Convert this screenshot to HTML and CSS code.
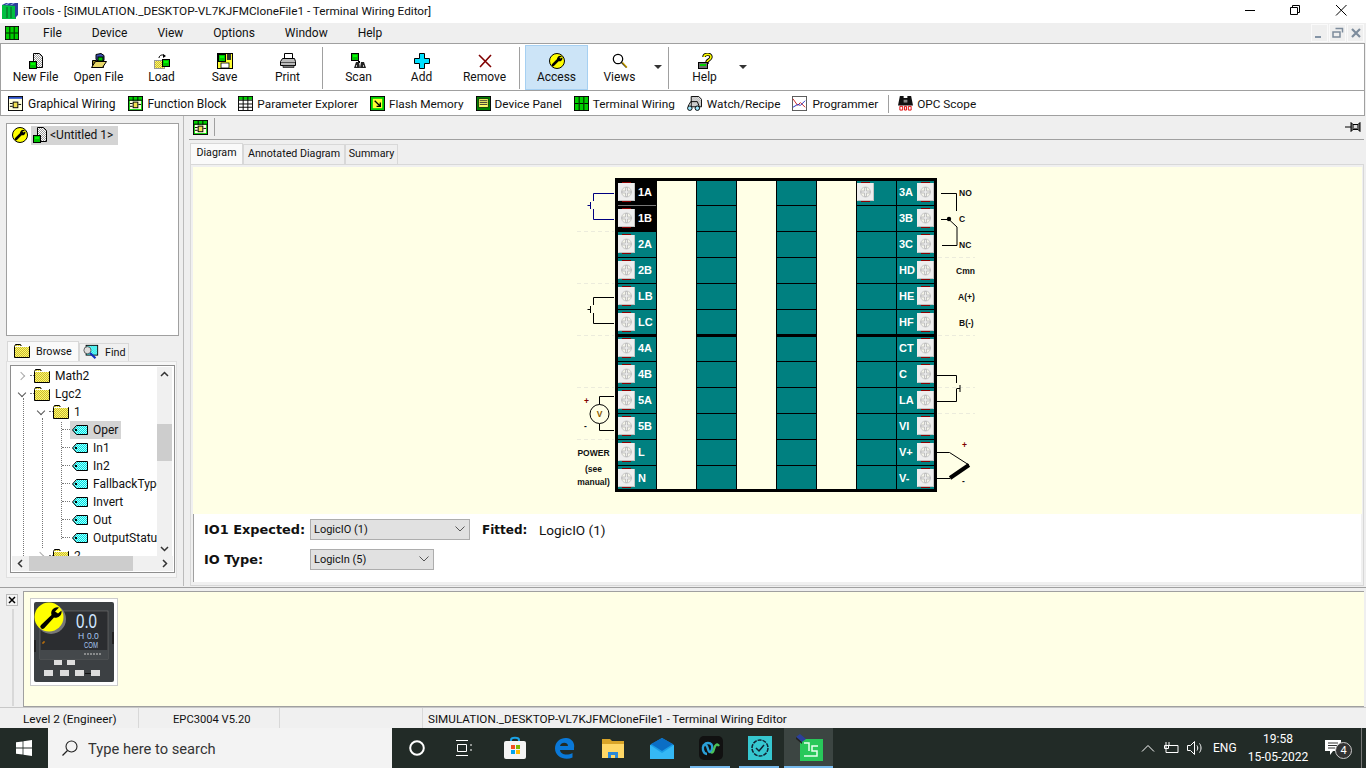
FILE: index.html
```html
<!DOCTYPE html>
<html lang="en">
<head>
    <meta charset="UTF-8">
    <meta name="viewport" content="width=device-width, initial-scale=1.0">
    <title>iTools - Terminal Wiring Editor</title>
    <link rel="stylesheet" href="styles.css">
</head>
<body>
    <!-- shared icons -->
    <svg class="defs" width="0" height="0">
        <defs>
            <pattern id="dither" width="2" height="2" patternUnits="userSpaceOnUse">
                <rect width="2" height="2" fill="#fff"/><rect width="1" height="1" fill="#999"/><rect x="1" y="1" width="1" height="1" fill="#999"/>
            </pattern>
            <pattern id="ditherYellow" width="2" height="2" patternUnits="userSpaceOnUse">
                <rect width="2" height="2" fill="#ffff66"/><rect width="1" height="1" fill="#c9b437"/><rect x="1" y="1" width="1" height="1" fill="#c9b437"/>
            </pattern>
            <pattern id="ditherCyan" width="2" height="2" patternUnits="userSpaceOnUse">
                <rect width="2" height="2" fill="#00e0e0"/><rect width="1" height="1" fill="#a0ffff"/><rect x="1" y="1" width="1" height="1" fill="#a0ffff"/>
            </pattern>
            <symbol id="i-page" viewBox="0 0 16 16">
                <path d="M5.5.5h6l3 3v11h-9z" fill="url(#dither)" stroke="#000"/>
                <rect x="1.5" y="8.5" width="7" height="7" fill="#00c000" stroke="#000"/>
                <rect x="3" y="10" width="4" height="2" fill="#00ff00"/>
            </symbol>
            <symbol id="i-open" viewBox="0 0 16 16">
                <path d="M1.5 7.5h4l1-1h6v8h-11z" fill="#8a7a20" stroke="#000"/>
                <path d="M5 1.5l5-1 3 2v5l-5 1-3-2z" fill="#3a4fb0" stroke="#000"/>
                <rect x="7" y="4" width="5" height="4" fill="#00c000" stroke="#000"/>
                <path d="M.5 14.5l4-6h11l-4 6z" fill="#e8d86a" stroke="#000"/>
            </symbol>
            <symbol id="i-load" viewBox="0 0 16 16">
                <path d="M5 5c0-3 4-4 6-2" fill="none" stroke="#000"/>
                <path d="M9 1l3 2-3 2z" fill="#000"/>
                <rect x=".5" y="7.5" width="10" height="8" fill="url(#ditherYellow)" stroke="#999"/>
                <rect x="8.5" y="6.5" width="7" height="7" fill="#00c000" stroke="#000"/>
                <rect x="10" y="8" width="4" height="2" fill="#00ff00"/>
            </symbol>
            <symbol id="i-save" viewBox="0 0 16 16">
                <rect x=".5" y=".5" width="15" height="15" fill="#ffff33" stroke="#000"/>
                <rect x="4" y="10" width="8" height="5" fill="#fff" stroke="#000" stroke-width=".8"/>
                <rect x="1.5" y="1.5" width="7" height="7" fill="#00c000" stroke="#000"/>
                <rect x="3" y="3" width="4" height="2" fill="#00ff00"/>
                <rect x="10" y="1" width="4" height="6" fill="#333"/>
            </symbol>
            <symbol id="i-print" viewBox="0 0 16 16">
                <path d="M4.5.5h8v5h-8z" fill="#fff" stroke="#000"/>
                <path d="M2.5 5.5h12l1 3v4H.5v-4z" fill="#bbb" stroke="#000"/>
                <path d="M1 9.5h14" stroke="#555"/>
                <path d="M3 12.5h11v2H3z" fill="#777" stroke="#000" stroke-width=".6"/>
            </symbol>
            <symbol id="i-scan" viewBox="0 0 16 16">
                <rect x=".5" y=".5" width="7" height="7" fill="#00c000" stroke="#000"/>
                <rect x="2" y="2" width="4" height="2" fill="#00ff00"/>
                <path d="M7 8h2v2H7z" fill="#000"/>
                <path d="M5 9h3l1 6H3zM10 9h3l2 6H9z" fill="#222"/>
                <path d="M5 12h1v2H5zM12 12h1v2h-1z" fill="#bbb"/>
            </symbol>
            <symbol id="i-add" viewBox="0 0 16 16">
                <path d="M5.5.5h5v5h5v5h-5v5h-5v-5h-5v-5h5z" fill="#00e0ff" stroke="#000"/>
            </symbol>
            <symbol id="i-remove" viewBox="0 0 16 16">
                <path d="M2 2l12 12M14 2L3 14" stroke="#800000" stroke-width="1.6" fill="none"/>
            </symbol>
            <symbol id="i-wrench" viewBox="0 0 16 16">
                <circle cx="8" cy="8" r="7.5" fill="#ffff00" stroke="#000"/>
                <path d="M4 12l5.500-5.500" stroke="#000" stroke-width="2.600" stroke-linecap="round"/>
                <path d="M13 3.400a3 3 0 0 0-4.500 3.800l.8.800a3 3 0 0 0 4-3.800l-1.600 1.300-1.500-.8z" fill="#000"/>
            </symbol>
            <symbol id="i-views" viewBox="0 0 16 16">
                <circle cx="6" cy="6" r="4.700" fill="#fff" stroke="#000" stroke-width="1.200"/>
                <path d="M9.500 9.500l5 5" stroke="#000" stroke-width="1.200"/>
                <path d="M10.500 9.500l4.500 5" stroke="#c8a000" stroke-width="1.200"/>
            </symbol>
            <symbol id="i-help" viewBox="0 0 16 16">
                <path d="M7 4c0-3 7-4 7 0 0 3-4 3-4 5v2" fill="none" stroke="#000" stroke-width="3.400"/>
                <path d="M7 4c0-3 7-4 7 0 0 3-4 3-4 5v2" fill="none" stroke="#ffff00" stroke-width="1.600"/>
                <rect x="1.500" y="9.500" width="9" height="6" fill="#707070" stroke="#000"/>
                <rect x="3" y="11" width="6" height="2" fill="#00d000"/>
            </symbol>
            <symbol id="i-graphic" viewBox="0 0 16 16">
                <rect x=".5" y=".5" width="15" height="15" fill="#ffffe0" stroke="#000"/>
                <rect x="1" y="1" width="14" height="2" fill="#2a4fc8"/>
                <rect x="5.500" y="6.500" width="5" height="6" fill="#f0e050" stroke="#000"/>
                <path d="M2 8h3M2 11h3M11 9h3" stroke="#000"/>
            </symbol>
            <symbol id="i-block" viewBox="0 0 16 16">
                <rect x=".5" y=".5" width="15" height="15" fill="#00d000" stroke="#000"/>
                <rect x="2" y="5" width="12" height="9" fill="#ffffe0"/>
                <path d="M1 4.500h14M5.500 1v4M10.500 1v4" stroke="#000"/>
                <rect x="5.500" y="6.500" width="5" height="6" fill="#f0e050" stroke="#000"/>
                <path d="M2 8h3M2 11h3M11 9h3" stroke="#000"/>
            </symbol>
            <symbol id="i-param" viewBox="0 0 16 16">
                <rect x=".5" y=".5" width="15" height="15" fill="#fff" stroke="#000"/>
                <rect x="1" y="1" width="14" height="3" fill="#00d000"/>
                <path d="M1 4.500h14M1 8.500h14M1 12h14M5.500 1v14M10.500 1v14" stroke="#000"/>
            </symbol>
            <symbol id="i-flash" viewBox="0 0 16 16">
                <rect x=".5" y=".5" width="15" height="15" fill="#00d000" stroke="#000"/>
                <rect x="3" y="3" width="10" height="10" fill="#ffff33"/>
                <path d="M5 5l6 6M11 7v4H7" stroke="#000" stroke-width="1.400" fill="none"/>
            </symbol>
            <symbol id="i-panel" viewBox="0 0 16 16">
                <rect x=".5" y=".5" width="15" height="15" fill="#008000" stroke="#000"/>
                <rect x="3" y="3" width="10" height="9" fill="#ffff66" stroke="#000" stroke-width=".6"/>
                <path d="M4 5h8M4 7h8M4 9h8" stroke="#333"/>
            </symbol>
            <symbol id="i-terminal" viewBox="0 0 16 16">
                <rect x=".5" y=".5" width="15" height="15" fill="#00d000" stroke="#000"/>
                <path d="M5.500 1v14M10.500 1v14M1 8h4M6 8h4M11 8h4" stroke="#000"/>
            </symbol>
            <symbol id="i-watch" viewBox="0 0 16 16">
                <path d="M4.500.5h8l3 3v8h-11z" fill="url(#dither)" stroke="#000"/>
                <circle cx="3" cy="13" r="2.400" fill="#a0e8ff" stroke="#000"/>
                <circle cx="11" cy="13" r="2.400" fill="#a0e8ff" stroke="#000"/>
                <path d="M1 11l3-5h7l2 5" fill="none" stroke="#000"/>
            </symbol>
            <symbol id="i-prog" viewBox="0 0 16 16">
                <rect x=".5" y=".5" width="15" height="15" fill="#fff" stroke="#555"/>
                <path d="M1 3l5 7 3-3 5 5" fill="none" stroke="#d02020"/>
                <path d="M1 12l5-3 3 1 5-5" fill="none" stroke="#2030c0"/>
            </symbol>
            <symbol id="i-opc" viewBox="0 0 16 16">
                <path d="M2 0h4v2h4V0h4l2 10H0z" fill="#111"/>
                <path d="M6 4h4v3H6z" fill="#888"/>
                <path d="M2 11h3v4H2zM7 11h2v4H7zM11 11h3v4h-3z" fill="none" stroke="#e00000"/>
            </symbol>
            <symbol id="i-folder" viewBox="0 0 16 16">
                <path d="M.5 3.500l1-2h5l1 2h8v11H.5z" fill="url(#ditherYellow)" stroke="#000"/>
                <path d="M1 3.500h14" stroke="#fff"/>
            </symbol>
            <symbol id="i-tag" viewBox="0 0 16 16">
                <path d="M.5 8l4-4.500h11v9h-11z" fill="url(#ditherCyan)" stroke="#000"/>
                <rect x="3" y="7" width="2" height="2" fill="#000"/>
            </symbol>
            <symbol id="i-find" viewBox="0 0 18 18">
                <rect x="3.500" y="1.500" width="13" height="11" fill="url(#ditherCyan)" stroke="#000"/>
                <circle cx="5" cy="7" r="4" fill="#ddd" stroke="#555"/>
                <path d="M8 10l6 6" stroke="#1030c0" stroke-width="2.400"/>
            </symbol>
            <symbol id="i-screw" viewBox="0 0 17 20">
                <path d="M4 .5h9M4 19.500h9" stroke="#8b0000"/>
                <rect y="1" width="17" height="18" fill="#eeeeee"/>
                <path d="M.5 18.500h16.500M16.500 1v18" stroke="#c4c4c4"/>
                <circle cx="8.500" cy="10" r="5" fill="#f4f4ea" stroke="#c8c8c8"/>
                <path d="M4 9h3.500V5.500h2V9H13v2H9.500v3.500h-2V11H4z" fill="#ececec" stroke="#b8b8b8" stroke-width=".8"/>
            </symbol>
        </defs>
    </svg>

    <div class="app">
        <header class="titlebar">
            <svg class="app-logo" width="16" height="16" viewBox="0 0 16 16">
                <rect y="2" width="14" height="14" fill="#00c040"/>
                <path d="M0 2l4-2h12v12l-3 3V3z" fill="#2b3f9a"/>
                <path d="M3 2l3-2h2L5 2zM8 2l3-2h2l-3 2z" fill="#8fa0e0"/>
                <path d="M5 4v11M9 4v11" stroke="#0a5a20"/>
            </svg>
            <span class="title-text">iTools - [SIMULATION._DESKTOP-VL7KJFMCloneFile1 - Terminal Wiring Editor]</span>
            <div class="win-controls">
                <svg width="46" height="20" viewBox="0 0 46 20"><path d="M19 10.500h10" stroke="#000"/></svg>
                <svg width="46" height="20" viewBox="0 0 46 20"><path d="M18.500 7.500h7v7h-7zM20.500 7V5.500h7v7H26" fill="none" stroke="#000"/></svg>
                <svg width="46" height="20" viewBox="0 0 46 20"><path d="M18 5l10.500 10.500M28.500 5L18 15.500" stroke="#000"/></svg>
            </div>
        </header>

        <nav class="menubar">
            <svg class="menu-icon"><use href="#i-terminal"/></svg>
            <span>File</span><span>Device</span><span>View</span><span>Options</span><span>Window</span><span>Help</span>
            <div class="mdi-controls">
                <div class="mdi-btn"><svg width="12" height="12" viewBox="0 0 12 12"><path d="M1 9h6v2H1z" fill="#8494a6"/></svg></div>
                <div class="mdi-btn"><svg width="12" height="12" viewBox="0 0 12 12"><path d="M3.500 1.500h7v4M1 5h7v5H1z" fill="none" stroke="#7d8c9c" stroke-width="1.500"/></svg></div>
                <div class="mdi-btn"><svg width="12" height="12" viewBox="0 0 12 12"><path d="M2 2l8 8M10 2l-8 8" stroke="#7d8c9c" stroke-width="2.200"/></svg></div>
            </div>
        </nav>

        <div class="toolbar">
            <div class="tool"><svg><use href="#i-page"/></svg><span>New File</span></div>
            <div class="tool"><svg><use href="#i-open"/></svg><span>Open File</span></div>
            <div class="tool"><svg><use href="#i-load"/></svg><span>Load</span></div>
            <div class="tool"><svg><use href="#i-save"/></svg><span>Save</span></div>
            <div class="tool"><svg><use href="#i-print"/></svg><span>Print</span></div>
            <div class="tool-sep"></div>
            <div class="tool"><svg><use href="#i-scan"/></svg><span>Scan</span></div>
            <div class="tool"><svg><use href="#i-add"/></svg><span>Add</span></div>
            <div class="tool"><svg><use href="#i-remove"/></svg><span>Remove</span></div>
            <div class="tool-sep before-active"></div>
            <div class="tool active"><svg><use href="#i-wrench"/></svg><span>Access</span></div>
            <div class="tool"><svg><use href="#i-views"/></svg><span>Views</span></div>
            <div class="tool-arrow"></div>
            <div class="tool-sep"></div>
            <div class="tool"><svg><use href="#i-help"/></svg><span>Help</span></div>
            <div class="tool-arrow"></div>
        </div>

        <div class="viewbar">
            <div class="view-item roomy big first"><svg><use href="#i-graphic"/></svg>Graphical Wiring</div>
            <div class="view-item big"><svg><use href="#i-block"/></svg>Function Block</div>
            <div class="view-item"><svg><use href="#i-param"/></svg>Parameter Explorer</div>
            <div class="view-item"><svg><use href="#i-flash"/></svg>Flash Memory</div>
            <div class="view-item"><svg><use href="#i-panel"/></svg>Device Panel</div>
            <div class="view-item"><svg><use href="#i-terminal"/></svg>Terminal Wiring</div>
            <div class="view-item roomy"><svg><use href="#i-watch"/></svg>Watch/Recipe</div>
            <div class="view-item roomy"><svg><use href="#i-prog"/></svg>Programmer</div>
            <div class="view-sep"></div>
            <div class="view-item"><svg><use href="#i-opc"/></svg>OPC Scope</div>
        </div>

        <main class="workspace">
            <aside class="sidebar">
                <div class="project-box">
                    <div class="project-row">
                        <svg class="icon16"><use href="#i-wrench"/></svg>
                        <span class="project-sel"><svg class="icon16"><use href="#i-page"/></svg><span>&lt;Untitled 1&gt;</span></span>
                    </div>
                </div>
                <div class="side-tabs">
                    <div class="side-tab current">
                        <svg class="icon16"><use href="#i-folder"/></svg>Browse
                    </div>
                    <div class="side-tab">
                        <svg class="icon16"><use href="#i-find"/></svg>Find
                    </div>
                </div>
                <div class="browse-panel">
                    <div class="browse-box">
                        <div class="tree-main">
                            <div class="tree">
                                <i class="guide guide-a"></i><i class="guide guide-b"></i><i class="guide guide-c"></i>
                                <div class="tree-row d0"><b class="exp closed"></b><em class="dots"></em><svg class="icon16"><use href="#i-folder"/></svg><span>Math2</span></div>
                                <div class="tree-row d0"><b class="exp open"></b><em class="dots"></em><svg class="icon16"><use href="#i-folder"/></svg><span>Lgc2</span></div>
                                <div class="tree-row d1"><b class="exp open"></b><em class="dots"></em><svg class="icon16"><use href="#i-folder"/></svg><span>1</span></div>
                                <div class="tree-row leaf"><em class="dots"></em><span class="leaf-label sel"><svg class="icon16"><use href="#i-tag"/></svg><span>Oper</span></span></div>
                                <div class="tree-row leaf"><em class="dots"></em><span class="leaf-label"><svg class="icon16"><use href="#i-tag"/></svg><span>In1</span></span></div>
                                <div class="tree-row leaf"><em class="dots"></em><span class="leaf-label"><svg class="icon16"><use href="#i-tag"/></svg><span>In2</span></span></div>
                                <div class="tree-row leaf"><em class="dots"></em><span class="leaf-label"><svg class="icon16"><use href="#i-tag"/></svg><span>FallbackType</span></span></div>
                                <div class="tree-row leaf"><em class="dots"></em><span class="leaf-label"><svg class="icon16"><use href="#i-tag"/></svg><span>Invert</span></span></div>
                                <div class="tree-row leaf"><em class="dots"></em><span class="leaf-label"><svg class="icon16"><use href="#i-tag"/></svg><span>Out</span></span></div>
                                <div class="tree-row leaf"><em class="dots"></em><span class="leaf-label"><svg class="icon16"><use href="#i-tag"/></svg><span>OutputStatus</span></span></div>
                                <div class="tree-row d1"><b class="exp closed"></b><em class="dots"></em><svg class="icon16"><use href="#i-folder"/></svg><span>2</span></div>
                            </div>
                            <div class="vscroll">
                                <svg width="15" height="15" viewBox="0 0 15 15"><path d="M4 9l3.500-3.500L11 9" fill="none" stroke="#333" stroke-width="1.500"/></svg>
                                <div class="vtrack"><div class="vthumb"></div></div>
                                <svg width="15" height="15" viewBox="0 0 15 15"><path d="M4 6l3.500 3.500L11 6" fill="none" stroke="#333" stroke-width="1.500"/></svg>
                            </div>
                        </div>
                        <div class="hscroll">
                            <svg width="17" height="15" viewBox="0 0 17 15"><path d="M10 4L6.500 7.500 10 11" fill="none" stroke="#333" stroke-width="1.500"/></svg>
                            <div class="htrack"><div class="hthumb"></div></div>
                            <svg width="17" height="15" viewBox="0 0 17 15"><path d="M7 4l3.500 3.500L7 11" fill="none" stroke="#333" stroke-width="1.500"/></svg>
                        </div>
                    </div>
                </div>
            </aside>

            <section class="editor">
                <div class="editor-bar">
                    <svg class="bar-icon"><use href="#i-block"/></svg>
                    <div class="editor-sep"></div>
                    <svg class="pin" width="16" height="12" viewBox="0 0 16 12"><path d="M0 6h6" stroke="#000"/><path d="M6 1.500l2 2h5l2-2v9l-2-2H8l-2 2z" fill="#666" stroke="#000"/><rect x="9" y="4" width="3" height="3" fill="#ddd"/></svg>
                </div>
                <div class="editor-tabs">
                    <div class="editor-tab current">Diagram</div>
                    <div class="editor-tab">Annotated Diagram</div>
                    <div class="editor-tab">Summary</div>
                </div>
                <div class="editor-panel">
                    <div class="diagram">
                        <div class="block">
                            <div class="col terminals left">
                                <div class="cell black gray-line"><svg class="screw"><use href="#i-screw"/></svg><span>1A</span></div>
                                <div class="cell black"><svg class="screw"><use href="#i-screw"/></svg><span>1B</span></div>
                                <div class="cell"><svg class="screw"><use href="#i-screw"/></svg><span>2A</span></div>
                                <div class="cell"><svg class="screw"><use href="#i-screw"/></svg><span>2B</span></div>
                                <div class="cell"><svg class="screw"><use href="#i-screw"/></svg><span>LB</span></div>
                                <div class="cell"><svg class="screw"><use href="#i-screw"/></svg><span>LC</span></div>
                                <div class="cell"><svg class="screw"><use href="#i-screw"/></svg><span>4A</span></div>
                                <div class="cell"><svg class="screw"><use href="#i-screw"/></svg><span>4B</span></div>
                                <div class="cell"><svg class="screw"><use href="#i-screw"/></svg><span>5A</span></div>
                                <div class="cell"><svg class="screw"><use href="#i-screw"/></svg><span>5B</span></div>
                                <div class="cell"><svg class="screw"><use href="#i-screw"/></svg><span>L</span></div>
                                <div class="cell"><svg class="screw"><use href="#i-screw"/></svg><span>N</span></div>
                            </div>
                            <div class="col blank"></div>
                            <div class="col">
                                <div class="cell"></div><div class="cell"></div><div class="cell"></div><div class="cell"></div><div class="cell"></div><div class="cell"></div>
                                <div class="cell"></div><div class="cell"></div><div class="cell"></div><div class="cell"></div><div class="cell"></div><div class="cell"></div>
                            </div>
                            <div class="col blank"></div>
                            <div class="col">
                                <div class="cell"></div><div class="cell"></div><div class="cell"></div><div class="cell"></div><div class="cell"></div><div class="cell"></div>
                                <div class="cell"></div><div class="cell"></div><div class="cell"></div><div class="cell"></div><div class="cell"></div><div class="cell"></div>
                            </div>
                            <div class="col blank"></div>
                            <div class="col terminals">
                                <div class="cell"><svg class="screw"><use href="#i-screw"/></svg></div><div class="cell"></div><div class="cell"></div><div class="cell"></div><div class="cell"></div><div class="cell"></div>
                                <div class="cell"></div><div class="cell"></div><div class="cell"></div><div class="cell"></div><div class="cell"></div><div class="cell"></div>
                            </div>
                            <div class="col terminals right">
                                <div class="cell"><span>3A</span><svg class="screw"><use href="#i-screw"/></svg></div>
                                <div class="cell"><span>3B</span><svg class="screw"><use href="#i-screw"/></svg></div>
                                <div class="cell"><span>3C</span><svg class="screw"><use href="#i-screw"/></svg></div>
                                <div class="cell"><span>HD</span><svg class="screw"><use href="#i-screw"/></svg></div>
                                <div class="cell"><span>HE</span><svg class="screw"><use href="#i-screw"/></svg></div>
                                <div class="cell"><span>HF</span><svg class="screw"><use href="#i-screw"/></svg></div>
                                <div class="cell"><span>CT</span><svg class="screw"><use href="#i-screw"/></svg></div>
                                <div class="cell"><span>C</span><svg class="screw"><use href="#i-screw"/></svg></div>
                                <div class="cell"><span>LA</span><svg class="screw"><use href="#i-screw"/></svg></div>
                                <div class="cell"><span>VI</span><svg class="screw"><use href="#i-screw"/></svg></div>
                                <div class="cell"><span>V+</span><svg class="screw"><use href="#i-screw"/></svg></div>
                                <div class="cell"><span>V-</span><svg class="screw"><use href="#i-screw"/></svg></div>
                            </div>
                        </div>

                        <!-- wires and labels round the block, in page coordinates -->
                        <svg class="wires">
                            <g transform="translate(-193 -167)">
                                <g class="pale">
                                    <path d="M577 231.500h37M577 283.500h37M577 335.500h37M577 387.500h37M577 439.500h37"/>
                                    <path d="M938 257.500h37M938 335.500h37M938 387.500h37M938 413.500h37"/>
                                </g>
                                <g class="wire navy">
                                    <path d="M614 193.500H593.500V201M593.500 209V219.500H614M590.500 202V209M587.500 205.500H590"/>
                                </g>
                                <g class="wire">
                                    <path d="M614 297.500H593.500V305M593.500 313V323.500H614M590.500 306V313M587.500 309.500H590"/>
                                    <path d="M614 396.500H599.500V404.500M599.500 424V430.500H614"/>
                                    <circle cx="599.500" cy="414" r="9.500"/>
                                    <path d="M941 193.500H956.500V211M941 219.500H949L957 227V245.500H942"/>
                                    <path d="M937 375.500H956.500V383M956.500 389V401.500H937M960 385V392M956.500 388.500H960"/>
                                    <path d="M937 452.500H949.500L969 465"/>
                                    <path d="M937 478.500H950"/>
                                    <path class="thick" d="M969 465L950 478"/>
                                </g>
                                <circle cx="949" cy="219" r="2.200" fill="#000"/>
                                <text class="lbl orange" x="599.500" y="417" text-anchor="middle">V</text>
                                <text class="lbl red" x="586.500" y="404" text-anchor="middle">+</text>
                                <text class="lbl" x="585.500" y="429" text-anchor="middle">-</text>
                                <text class="lbl" x="593.500" y="456" text-anchor="middle">POWER</text>
                                <text class="lbl" x="593.500" y="472" text-anchor="middle">(see</text>
                                <text class="lbl" x="593.500" y="485" text-anchor="middle">manual)</text>
                                <text class="lbl" x="959" y="196">NO</text>
                                <text class="lbl" x="959" y="222">C</text>
                                <text class="lbl" x="959" y="248">NC</text>
                                <text class="lbl" x="956" y="274">Cmn</text>
                                <text class="lbl" x="958" y="300">A(+)</text>
                                <text class="lbl" x="959" y="326">B(-)</text>
                                <text class="lbl red" x="964.500" y="448" text-anchor="middle">+</text>
                                <text class="lbl" x="963.500" y="484" text-anchor="middle">-</text>
                            </g>
                        </svg>
                    </div>
                    <div class="io-form">
                        <div class="io-row">
                            <span class="io-label">IO1 Expected:</span>
                            <div class="combo wide"><span>LogicIO (1)</span><svg width="10" height="6" viewBox="0 0 10 6"><path d="M.5.500L5 5 9.500.500" fill="none" stroke="#555"/></svg></div>
                            <span class="io-label fitted">Fitted:</span>
                            <span class="io-value">LogicIO (1)</span>
                        </div>
                        <div class="io-row">
                            <span class="io-label">IO Type:</span>
                            <div class="combo"><span>LogicIn (5)</span><svg width="10" height="6" viewBox="0 0 10 6"><path d="M.5.500L5 5 9.500.500" fill="none" stroke="#555"/></svg></div>
                        </div>
                    </div>
                </div>
            </section>
        </main>

        <section class="devices">
            <div class="devices-grip">
                <div class="close-btn"><svg width="8" height="8" viewBox="0 0 8 8"><path d="M1 1l6 6M7 1L1 7" stroke="#000" stroke-width="1.500"/></svg></div>
                <div class="grip-line"></div>
            </div>
            <div class="devices-list">
                <div class="device-thumb">
                    <svg width="80" height="80" viewBox="0 0 80 80">
                        <rect width="80" height="80" rx="2" fill="#3c4043"/>
                        <rect x="0" y="38" width="2" height="12" fill="#222"/>
                        <rect x="78" y="30" width="2" height="12" fill="#222"/>
                        <rect x="6" y="9" width="68" height="48" fill="#2b2d30" stroke="#777" stroke-width=".6"/>
                        <rect x="6" y="48" width="68" height="9" fill="#44484b"/>
                        <text class="dev-big" x="42" y="26" textLength="21" lengthAdjust="spacingAndGlyphs">0.0</text>
                        <text class="dev-mid" x="44" y="37">H</text>
                        <text class="dev-mid" x="53" y="37">0.0</text>
                        <text class="dev-mid" x="50" y="46" textLength="14" lengthAdjust="spacingAndGlyphs">COM</text>
                        <path d="M8 41h2v-2" stroke="#e08000" fill="none"/>
                        <path d="M50 52h18" stroke="#ccc" stroke-dasharray="2 1"/>
                        <rect x="20" y="58" width="8" height="5" fill="#ddd"/>
                        <rect x="33" y="58" width="8" height="5" fill="#ddd"/>
                        <rect x="10" y="68" width="9" height="6" fill="#ddd"/>
                        <rect x="26" y="68" width="9" height="6" fill="#ddd"/>
                        <rect x="41" y="68" width="9" height="6" fill="#ddd"/>
                        <rect x="57" y="68" width="9" height="6" fill="#ddd"/>
                        <path d="M51 71.500h6" stroke="#111"/>
                        <circle cx="17" cy="17" r="15" fill="#777"/>
                        <circle cx="15" cy="15" r="14.500" fill="#ffff00"/>
                        <path d="M25 5.500a6 6 0 0 0-7.500 7.500L7 23a2.200 2.200 0 0 0 3.200 3.200L20 15.500a6 6 0 0 0 7.500-7l-3.500 3-3-2z" fill="#000"/>
                    </svg>
                </div>
            </div>
        </section>

        <footer class="statusbar">
            <span class="st-level">Level 2 (Engineer)</span>
            <span class="st-device">EPC3004 V5.20</span>
            <span class="st-gap"></span>
            <span class="st-title">SIMULATION._DESKTOP-VL7KJFMCloneFile1 - Terminal Wiring Editor</span>
        </footer>

        <div class="taskbar">
            <div class="start">
                <svg width="16" height="16" viewBox="0 0 16 16"><path d="M0 2.300l6.600-.9v6.200H0zM7.400 1.300L16 0v7.600H7.400zM0 8.400h6.600v6.200L0 13.700zM7.400 8.400H16V16l-8.600-1.300z" fill="#fff"/></svg>
            </div>
            <div class="search">
                <svg width="16" height="16" viewBox="0 0 16 16"><circle cx="9.500" cy="6.500" r="5.500" fill="none" stroke="#222" stroke-width="1.100"/><path d="M5.500 10.500L.5 15.500" stroke="#222" stroke-width="1.300"/></svg>
                <span>Type here to search</span>
            </div>
            <div class="task-icons">
                <div class="task-btn"><svg width="18" height="18" viewBox="0 0 18 18"><circle cx="9" cy="9" r="6.800" fill="none" stroke="#fff" stroke-width="2"/></svg></div>
                <div class="task-btn view-btn"><svg width="18" height="16" viewBox="0 0 18 16"><path d="M1 .5h12M1 15.500h12M2.500 4.500h9v7h-9zM16 4v2M16 9v2" fill="none" stroke="#fff"/></svg></div>
                <div class="task-btn"><svg width="24" height="24" viewBox="0 0 24 24"><path d="M8 6V4c0-3 8-3 8 0v2" fill="none" stroke="#1aa3e8" stroke-width="2"/><rect x="1" y="5" width="22" height="18" rx="2" fill="#f4f4f4"/><rect x="8" y="9" width="4" height="4" fill="#f25022"/><rect x="13" y="9" width="4" height="4" fill="#7fba00"/><rect x="8" y="14" width="4" height="4" fill="#00a4ef"/><rect x="13" y="14" width="4" height="4" fill="#ffb900"/></svg></div>
                <div class="task-btn"><svg width="22" height="22" viewBox="0 0 22 22"><path d="M20.500 13H7c.5 4.500 7 6 12.500 3v4.500C12 24 2 20 2 11.500 2 4.500 8 .5 13.500 1 19 1.500 22 6 21 11v2zM15 9c0-4-7-4.500-8 0z" fill="#0a78d7"/></svg></div>
                <div class="task-btn"><svg width="22" height="20" viewBox="0 0 22 20"><path d="M0 1h8l2 2h12v15H0z" fill="#d9a428"/><path d="M0 6h22v14H0z" fill="#ffd766"/><path d="M6 14h10v6h-3v-3H9v3H6z" fill="#2b88d8"/></svg></div>
                <div class="task-btn"><svg width="24" height="22" viewBox="0 0 24 22"><path d="M12 1L0 8v14h24V8z" fill="#1a9ee8"/><path d="M0 8l12 8 12-8v14H0z" fill="#35b8f5"/><path d="M1 7l11-6 11 6-11 7z" fill="#0b6ec5"/></svg></div>
                <div class="task-btn running"><svg width="24" height="24" viewBox="0 0 24 24"><rect width="24" height="24" rx="5" fill="#111"/><path d="M4 10c2-3 4-1 5 3s3 4 4 0-1-6-4-6-6 3-5 7 4 4 4 4" fill="none" stroke="#2a9fd8" stroke-width="2.400"/><path d="M20 10c-2-3-4-1-5 3s-2 4-3 3" fill="none" stroke="#4cc35a" stroke-width="2.400"/></svg></div>
                <div class="task-btn running"><svg width="24" height="24" viewBox="0 0 24 24"><rect width="24" height="24" fill="#36c7d0"/><circle cx="12" cy="12" r="8" fill="none" stroke="#123" stroke-width="1.500" stroke-dasharray="4 1"/><path d="M8 12l3 3 5-6" fill="none" stroke="#123" stroke-width="1.500"/></svg></div>
                <div class="task-btn running current"><svg width="28" height="28" viewBox="0 0 28 28"><rect x="5" y="5" width="23" height="22" fill="#28c85a"/><path d="M9 22h13v-5h-5v-5h6M9 9h5v8" fill="none" stroke="#e8fff0" stroke-width="1.500"/><path d="M1 3l4-3 6 5-4 3z" fill="#2b3f9a"/><path d="M1 3l6 5v2L1 5z" fill="#222"/></svg></div>
            </div>
            <div class="tray">
                <svg width="14" height="8" viewBox="0 0 14 8"><path d="M1 7.500l6-6 6 6" fill="none" stroke="#fff"/></svg>
                <svg class="tray-battery" width="16" height="12" viewBox="0 0 16 12"><path d="M3 3.500h12v7H3zM3 0v3M6 0v3M1.500 3.500h4v3h-4z" fill="none" stroke="#fff"/></svg>
                <svg class="tray-sound" width="16" height="14" viewBox="0 0 16 14"><path d="M.5 4.500h3l4-4v13l-4-4h-3zM10 4.500c1 1.500 1 3.500 0 5M12.500 2.500c2 2.500 2 6.500 0 9" fill="none" stroke="#fff"/></svg>
                <span class="tray-lang">ENG</span>
                <div class="clock"><span>19:58</span><span>15-05-2022</span></div>
                <div class="notify">
                    <svg width="18" height="16" viewBox="0 0 18 16"><path d="M0 0h16v11H8l-3 4v-4H0z" fill="#fff"/><path d="M3 3h10M3 5.500h10M3 8h7" stroke="#333"/></svg>
                    <span class="notify-count">4</span>
                </div>
                <div class="show-desktop"></div>
            </div>
        </div>
    </div>
</body>
</html>
```

FILE: styles.css
```css
* {
    box-sizing: border-box;
}
html, body {
    margin: 0;
    padding: 0;
    overflow: hidden;
}
body {
    font-family: Roboto, "Liberation Sans", sans-serif;
    font-size: 12px;
    color: #111;
    background: #efefef;
}
svg {
    display: block;
    flex: none;
}
.defs {
    position: absolute;
}
.app {
    width: 1366px;
    height: 768px;
    display: flex;
    flex-direction: column;
}
.icon16 {
    width: 16px;
    height: 16px;
}

/* title bar */
.titlebar {
    height: 23px;
    background: #fff;
    display: flex;
    align-items: center;
    padding-left: 2px;
}
.title-text {
    margin-left: 5px;
    font-size: 11.770px;
}
.win-controls {
    margin-left: auto;
    margin-right: 2px;
    align-self: flex-start;
    display: flex;
}

/* menu */
.menubar {
    height: 20px;
    display: flex;
    align-items: center;
    background: #efefef;
    position: relative;
}
.menu-icon {
    width: 14px;
    height: 14px;
    margin-left: 5px;
    margin-right: 24px;
}
.menubar span {
    margin-right: 30px;
}
.mdi-controls {
    margin-left: auto;
    margin-right: 2px;
    display: flex;
    gap: 1px;
}
.mdi-btn {
    width: 17px;
    height: 18px;
    border: 1px solid #fafafa;
    display: flex;
    align-items: center;
    justify-content: center;
}

/* big toolbar */
.toolbar {
    height: 48px;
    background: #fff;
    border: 1px solid #a0a0a0;
    display: flex;
    padding-left: 3px;
    margin-right: 1px;
}
.tool {
    width: 63px;
    display: flex;
    flex-direction: column;
    align-items: center;
    padding-top: 8px;
    border: 1px solid transparent;
}
.tool svg {
    width: 16px;
    height: 16px;
}
.tool span {
    margin-top: 1px;
}
.tool.active {
    background: #cce4f7;
    border-color: #a6d0f2;
    margin-top: 1px;
}
.tool.active svg {
    margin-top: -1px;
}
.tool-sep {
    width: 1px;
    margin: 3px 4px 1px 3px;
    background: #a0a0a0;
}
.tool-sep.before-active {
    margin-right: 5px;
}
.tool-arrow {
    width: 14px;
    position: relative;
}
.tool-arrow::after {
    content: "";
    position: absolute;
    left: 3px;
    top: 21px;
    border: 4px solid transparent;
    border-top: 4px solid #333;
    border-bottom: 0;
}

/* views toolbar */
.viewbar {
    height: 25px;
    background: #fff;
    border: 1px solid #a0a0a0;
    border-top: 0;
    display: flex;
    align-items: center;
    padding: 2px 0 0 7px;
    margin-right: 1px;
    font-size: 11.800px;
}
.view-item {
    display: flex;
    align-items: center;
    gap: 4px;
    margin-right: 12px;
}
.view-item.first {
    margin-right: 13px;
}
.view-item.roomy {
    gap: 5px;
}
.view-item.big {
    font-size: 12px;
}
.view-item svg {
    width: 15px;
    height: 15px;
}
.view-sep {
    width: 1px;
    height: 18px;
    background: #a0a0a0;
    margin: 0 9px 0 -2px;
}

/* main area */
.workspace {
    height: 470px;
    display: flex;
}
.sidebar {
    width: 184px;
    flex: none;
    padding: 7px 0 0 6px;
    border-right: 1px solid #bbb;
    margin-right: 2px;
}
.project-box {
    width: 173px;
    height: 213px;
    background: #fff;
    border: 1px solid #a0a0a0;
    padding: 2px 0 0 5px;
}
.project-row {
    display: flex;
    align-items: center;
    gap: 3px;
}
.project-sel {
    display: flex;
    align-items: center;
    gap: 2px;
    background: #d4d4d4;
    height: 19px;
    padding-left: 1px;
    width: 87px;
}
.side-tabs {
    display: flex;
    height: 20px;
    margin-top: 5px;
    padding-left: 1px;
    align-items: flex-end;
    font-size: 10.800px;
}
.side-tab {
    display: flex;
    align-items: center;
    gap: 6px;
    width: 50px;
    height: 18px;
    padding-left: 3px;
    border: 1px solid #d8d8d8;
    border-bottom: 0;
    background: #f0f0f0;
}
.side-tab.current {
    height: 20px;
    background: #fafafa;
    width: 72px;
    padding-left: 6px;
}
.browse-panel {
    width: 171px;
    height: 217px;
    background: #f6f6f6;
    border: 1px solid #e0e0e0;
    padding: 3px 0 0 3px;
}
.browse-box {
    width: 165px;
    height: 208px;
    border: 1px solid #8e8e8e;
    background: #fff;
    padding: 1px;
}
.tree-main {
    display: flex;
    height: 189px;
}
.tree {
    position: relative;
    width: 145px;
    height: 189px;
    overflow: hidden;
}
.tree-row {
    height: 18px;
    display: flex;
    align-items: center;
    white-space: nowrap;
}
.tree-row.d0 {
    padding-left: 4px;
}
.tree-row.d1 {
    padding-left: 23px;
}
.tree-row.leaf {
    padding-left: 50px;
}
.tree-row > span {
    margin-left: 5px;
    flex: none;
}
.tree-row > .leaf-label {
    margin-left: 0;
}
.exp {
    width: 14px;
    height: 18px;
    position: relative;
}
.exp::after {
    content: "";
    position: absolute;
    width: 5px;
    height: 5px;
    left: 3px;
    top: 5px;
    border-right: 1.5px solid #555;
    border-bottom: 1.5px solid #555;
    transform: rotate(45deg);
}
.exp.closed::after {
    border-color: #aaa;
    transform: rotate(-45deg);
    top: 6px;
    left: 2px;
}
.dots {
    width: 4px;
    flex: none;
    border-top: 1px dotted #777;
}
.leaf .dots {
    width: 8px;
}
.leaf-label {
    display: flex;
    align-items: center;
    gap: 5px;
    height: 18px;
    padding: 0 3px 0 2px;
}
.leaf-label.sel {
    background: #d4d4d4;
}
.guide {
    position: absolute;
    border-left: 1px dotted #777;
}
.guide-a {
    left: 11px;
    top: 31px;
    height: 158px;
}
.guide-b {
    left: 30px;
    top: 51px;
    height: 130px;
}
.guide-c {
    left: 49px;
    top: 55px;
    height: 117px;
}
.vscroll {
    width: 15px;
    background: #f0f0f0;
    display: flex;
    flex-direction: column;
}
.vtrack {
    flex: 1;
    padding-top: 42px;
}
.vthumb {
    height: 37px;
    background: #cdcdcd;
}
.hscroll {
    height: 15px;
    background: #f0f0f0;
    display: flex;
}
.htrack {
    flex: 1;
    display: flex;
}
.hthumb {
    width: 104px;
    background: #cdcdcd;
}

/* editor */
.editor {
    flex: 1;
    min-width: 0;
    display: flex;
    flex-direction: column;
}
.editor-bar {
    height: 24px;
    display: flex;
    align-items: center;
    padding-left: 4px;
    border-bottom: 1px solid #a0a0a0;
    margin-left: 3px;
    margin-right: 2px;
}
.bar-icon {
    width: 15px;
    height: 15px;
}
.editor-sep {
    width: 1px;
    height: 18px;
    background: #a0a0a0;
    margin-left: 6px;
}
.pin {
    margin-left: auto;
    margin-right: 3px;
}
.editor-tabs {
    display: flex;
    height: 24px;
    padding: 0 0 0 4px;
    align-items: flex-end;
    font-size: 10.700px;
}
.editor-tab {
    width: 102px;
    height: 20px;
    padding-bottom: 1px;
    border: 1px solid #d8d8d8;
    border-bottom: 0;
    display: flex;
    align-items: center;
    justify-content: center;
}
.editor-tab:nth-child(3) {
    width: 53px;
}
.editor-tab.current {
    width: 53px;
    height: 21px;
    padding-bottom: 3px;
    background: #fafafa;
}
.editor-panel {
    margin-left: 4px;
    margin-right: 2px;
    height: 422px;
    border: 1px solid #d8d8d8;
    padding: 2px;
    background: #f0f0f0;
}
.diagram {
    position: relative;
    height: 347px;
    width: 1169px;
    background: #ffffe6;
    padding: 11px 0 0 422px;
}
.block {
    width: 322px;
    height: 314px;
    background: #000;
    border: 3px solid #000;
    display: flex;
    gap: 1px;
}
.col {
    width: 39px;
    display: flex;
    flex-direction: column;
    gap: 1px;
}
.col:first-child {
    width: 38px;
}
.col:last-child {
    width: 37px;
}
.col.blank {
    background: #ffffe6;
}
.cell {
    height: 25px;
    background: #008080;
    position: relative;
    display: flex;
    align-items: flex-start;
    color: #fff;
    font-family: "Liberation Sans", sans-serif;
    font-weight: bold;
    font-size: 11px;
}
.cell:nth-child(1), .cell:nth-child(6), .cell:nth-child(7) {
    height: 24px;
}
.cell:nth-child(6) {
    margin-bottom: 2px;
}
.cell:nth-child(12) {
    height: 23px;
}
.cell.black {
    background: #000;
}
.gray-line {
    box-shadow: 0 1px 0 #777;
}
.screw {
    width: 17px;
    height: 20px;
    margin-top: 2px;
}
.cell:nth-child(1) .screw, .cell:nth-child(7) .screw {
    margin-top: 1px;
}
.left .cell span {
    margin: 6px 0 0 3px;
}
.right .cell {
    justify-content: flex-end;
}
.right .cell span {
    margin: 6px auto 0 2px;
}
.left .cell:nth-child(1) span, .left .cell:nth-child(7) span,
.right .cell:nth-child(1) span, .right .cell:nth-child(7) span {
    margin-top: 5px;
}
.wires {
    position: absolute;
    left: 0;
    top: 0;
    width: 100%;
    height: 100%;
    pointer-events: none;
}
.wire {
    fill: none;
    stroke: #000;
}
.wire.navy {
    stroke: #000080;
}
.wire .thick {
    stroke-width: 4;
}
.pale {
    fill: none;
    stroke: #ececdc;
    stroke-dasharray: 4 3;
}
.lbl {
    font-family: "Liberation Sans", sans-serif;
    font-size: 8.500px;
    font-weight: bold;
    fill: #111;
}
.lbl.orange {
    fill: #8a5a00;
}
.lbl.red {
    fill: #800000;
}
.io-form {
    height: 68px;
    background: #fff;
    border-left: 1px solid #a0a0a0;
    padding: 5px 0 0 10px;
}
.io-row {
    height: 21px;
    display: flex;
    align-items: center;
    margin-bottom: 9px;
}
.io-label {
    width: 106px;
    padding-top: 1px;
    font-family: "DejaVu Sans", sans-serif;
    font-weight: bold;
    font-size: 12.900px;
}
.combo {
    width: 124px;
    height: 21px;
    background: #e1e1e1;
    border: 1px solid #adadad;
    display: flex;
    align-items: center;
    justify-content: space-between;
    padding: 0 4px 0 3px;
    font-size: 11px;
}
.combo span {
    padding-top: 1px;
}
.combo.wide {
    width: 160px;
}
.io-label.fitted {
    width: 57px;
    margin-left: 12px;
    font-size: 12px;
}
.io-value {
    font-size: 13.600px;
    padding-top: 1px;
}

/* device strip */
.devices {
    height: 121px;
    display: flex;
    border-top: 1px solid #a0a0a0;
    margin-top: 1px;
}
.devices-grip {
    width: 23px;
    flex: none;
    padding: 6px 0 0 6px;
}
.close-btn {
    width: 12px;
    height: 12px;
    border: 1px solid #bbb;
    background: #f4f4f4;
    display: flex;
    align-items: center;
    justify-content: center;
}
.grip-line {
    width: 2px;
    height: 97px;
    margin: 3px 0 0 6px;
    background: #d8d8d8;
}
.devices-list {
    flex: 1;
    margin: 3px 2px 0 0;
    background: #ffffe6;
    border: 1px solid #a0a0a0;
    border-width: 1px 0 1px 1px;
    padding: 6px 0 0 6px;
}
.device-thumb {
    width: 88px;
    height: 88px;
    background: #fff;
    border: 1px solid #ccc;
    padding: 3px;
}
.dev-big {
    font-family: "Liberation Sans", sans-serif;
    font-size: 21px;
    fill: #d0e6ff;
}
.dev-mid {
    font-family: "Liberation Sans", sans-serif;
    font-size: 8.500px;
    fill: #a8c8f0;
}

/* status bar */
.statusbar {
    height: 21px;
    display: flex;
    align-items: center;
    border-top: 1px solid #c8c8c8;
    background: #f0f0f0;
    font-size: 11.800px;
}
.statusbar span {
    height: 20px;
    line-height: 23px;
}
.st-level {
    width: 139px;
    padding-left: 23px;
    border-right: 1px solid #d8d8d8;
}
.st-device {
    width: 141px;
    padding-left: 34px;
    border-right: 1px solid #d8d8d8;
    font-size: 11.200px;
}
.st-gap {
    width: 143px;
    border-right: 1px solid #d8d8d8;
}
.st-title {
    padding-left: 5px;
    font-size: 11.700px;
}

/* windows taskbar */
.taskbar {
    height: 40px;
    background: #222b27;
    display: flex;
    color: #fff;
}
.start {
    width: 48px;
    display: flex;
    align-items: center;
    justify-content: center;
}
.search {
    width: 344px;
    background: #f3f3f3;
    display: flex;
    align-items: center;
    padding-left: 14px;
    gap: 10px;
    color: #333;
    font-size: 14.700px;
}
.search span {
    padding-top: 1px;
}
.task-icons {
    display: flex;
}
.task-btn {
    width: 49px;
    display: flex;
    align-items: center;
    justify-content: center;
    position: relative;
}
.view-btn svg {
    margin-right: 4px;
}
.task-btn.running::after {
    content: "";
    position: absolute;
    left: 4px;
    right: 5px;
    bottom: 0;
    height: 2px;
    background: #76b9ed;
}
.task-btn.current {
    background: #3c4542;
}
.task-btn.current::after {
    left: 0;
    right: 0;
}
.tray {
    margin-left: auto;
    display: flex;
    align-items: center;
}
.tray-battery {
    margin-left: 8px;
}
.tray-sound {
    margin-left: 8px;
}
.tray-lang {
    margin-left: 10px;
    width: 22px;
    white-space: nowrap;
}
.clock {
    width: 86px;
    display: flex;
    flex-direction: column;
    align-items: center;
    gap: 4px;
    line-height: 14px;
    font-size: 12px;
}
.notify {
    width: 40px;
    position: relative;
    padding-left: 4px;
}
.notify-count {
    position: absolute;
    left: 14px;
    top: 2px;
    width: 17px;
    height: 17px;
    border: 1px solid #ccc;
    border-radius: 50%;
    background: #333;
    font-size: 11px;
    text-align: center;
    line-height: 15px;
}
.show-desktop {
    width: 5px;
    height: 40px;
    border-left: 1px solid #777;
}
```
